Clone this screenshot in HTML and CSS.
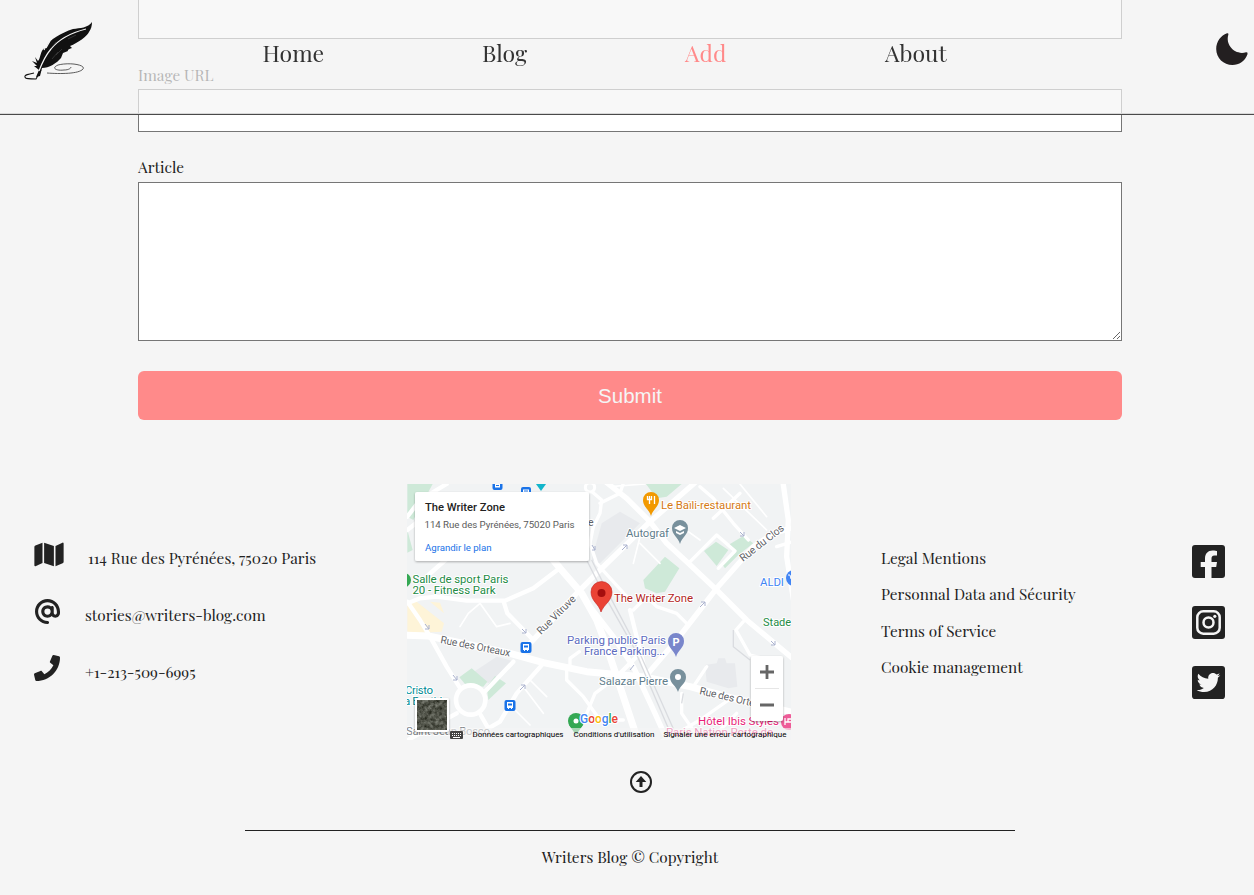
FILE: index.html
```html
<!DOCTYPE html>
<html lang="en">
<head>
<meta charset="utf-8">
<title>Writers Blog</title>
<link rel="stylesheet" href="styles.css">
</head>
<body>
<header class="header">
  <svg class="logo" viewBox="0 0 72 62" aria-label="Writers Blog">
    <path fill="#111" d="M70 1C66 7 58 7 51 8C39 12 28 18 23 27C18 29 19 37 16 40L13 36L15 42L10 40L15 45L12 45L17 49L14 56L18 55L20 47C27 47 35 42 39 37L41 32L46 30C45 29 47 28 50 27L48 25C56 22 65 15 67 11C69 8 70 5 70 1Z"/>
    <path fill="none" stroke="#f5f5f5" stroke-width="1.2" d="M64 8C48 12 37 18 29 28C23 35 20 42 17 50M25 23L22 29M28 20L24 27"/>
    <path fill="none" stroke="#555" stroke-width=".5" d="M30 38L36 31M34 34L40 28M34 21L31 25M46 18L54 14"/>
    <path fill="none" stroke="#111" stroke-width="1.1" d="M19 49L14 58C8 58 3 58 3 56C2 54 7 53 12 52"/>
    <path fill="none" stroke="#333" stroke-width=".8" d="M25 52C38 53 57 53 61 48C64 44 48 41 36 44C29 47 34 50 42 49C47 49 49 47 49 46"/>
  </svg>
  <nav class="nav">
    <a class="nav-link">Home</a>
    <a class="nav-link">Blog</a>
    <a class="nav-link active">Add</a>
    <a class="nav-link">About</a>
  </nav>
  <svg class="moon" viewBox="0 0 34 34"><path fill="#231f20" d="M12 1.2Q13.6 .8 13.4 2.6C10 13 20 23.500 31 20.300Q33.300 20 32.400 22.500C30 29 24 33 17.500 33C8.500 33 1.200 26 1.200 17C1.200 9.500 6 3.200 12 1.200Z"/></svg>
</header>

<main class="form">
  <input class="field" type="text">
  <label class="label label-image">Image URL</label>
  <input class="field" type="text">
  <label class="label">Article</label>
  <textarea class="area"></textarea>
  <button class="submit">Submit</button>
</main>

<footer class="footer">
  <div class="columns">
    <ul class="contacts">
      <li class="contact">
        <svg class="icon-map" viewBox="0 0 576 512"><path d="M0 118v362c0 11 11 19 22 15l138-63V32L20 88C8 93 0 105 0 118zM192 32v400l192 64V96zM554 33L416 96v400l140-56c12-5 20-17 20-30V48c0-11-11-19-22-15z"/></svg>
        <span class="contact-text">114 Rue des Pyrénées, 75020 Paris</span>
      </li>
      <li class="contact">
        <svg class="icon-at" viewBox="0 0 512 512"><path d="M256 64C150 64 64 150 64 256s86 192 192 192c17.700 0 32 14.300 32 32s-14.300 32-32 32C114.600 512 0 397.400 0 256S114.600 0 256 0S512 114.600 512 256v32c0 53-43 96-96 96c-29.300 0-55.600-13.200-73.200-33.900C320 371.100 289.500 384 256 384c-70.700 0-128-57.300-128-128s57.300-128 128-128c27.900 0 53.700 8.900 74.700 24.100c5.700-5 13.100-8.100 21.300-8.100c17.700 0 32 14.300 32 32v112c0 17.700 14.300 32 32 32s32-14.300 32-32V256c0-106-86-192-192-192zm64 192a64 64 0 1 0-128 0 64 64 0 1 0 128 0z"/></svg>
        <span class="contact-text">stories@writers-blog.com</span>
      </li>
      <li class="contact">
        <svg class="icon-phone" viewBox="0 0 512 512"><path d="M493.400 24.600l-104-24c-11.300-2.600-22.900 3.300-27.500 13.900l-48 112c-4.200 9.800-1.400 21.300 6.900 28l60.600 49.600c-36 76.700-98.900 140.500-177.200 177.200l-49.600-60.600c-6.800-8.300-18.200-11.100-28-6.900l-112 48C3.900 366.500-2 378.100.6 389.400l24 104C27.100 504.200 36.700 512 48 512c256.100 0 464-207.500 464-464 0-11.200-7.700-20.900-18.600-23.400z"/></svg>
        <span class="contact-text">+1-213-509-6995</span>
      </li>
    </ul>

    <svg class="map" viewBox="407 484 384 256">
      <defs>
        <clipPath id="mapclip"><rect x="407" y="484" width="384" height="256"/></clipPath>
        <filter id="shadow" x="-20%" y="-20%" width="140%" height="150%"><feDropShadow dx="0" dy="1" stdDeviation="1.300" flood-opacity=".3"/></filter>
        <filter id="terrain" x="0" y="0" width="100%" height="100%" color-interpolation-filters="sRGB"><feTurbulence type="fractalNoise" baseFrequency=".28" numOctaves="3" seed="7"/><feColorMatrix values=".5 0 0 0 .07  .5 0 0 0 .08  .5 0 0 0 .04  0 0 0 0 1"/></filter>
      </defs>
      <g clip-path="url(#mapclip)">
        <rect x="407" y="484" width="384" height="256" fill="#f1f3f4"/>
        <g transform="translate(400 480) scale(.33333)">
          <path fill="#e8eaed" d="M605 130L660 95L720 130L600 250L575 240ZM215 580L290 530L345 545L265 610ZM915 555L950 550L955 535L975 535L980 550L1005 550L1012 620L985 625L920 605Z"/>
          <path fill="#cee9d8" d="M738 12H845L800 50L770 55ZM22 12H98L40 120L22 110ZM22 150L38 210L22 218ZM730 300L795 230L838 265L795 335L770 340L735 325ZM912 213L948 185L985 210L950 258ZM985 195L1030 168L1060 190L1015 225L975 265L968 255L1005 215ZM178 592L215 565L262 605L250 620L195 612ZM260 620L285 588L318 610L265 660Z"/>
          <path fill="#fef4d8" d="M22 370L50 365L132 430L125 455L60 458L22 455ZM90 365L120 368L132 400Z"/>
          <g fill="none" stroke="#fff" stroke-linecap="round" stroke-linejoin="round">
            <path stroke-width="21" d="M0 465L85 468L330 520L430 548L560 575L740 592L870 620L1000 655L1190 700M390 155L480 265L545 340L590 420L620 500L650 590L700 740L720 800"/>
            <path stroke-width="16" d="M390 490L530 340L600 270L750 125L900 -5M570 380L640 470L700 560L765 700L810 800M610 0L680 55L750 125L800 190L865 250L950 330L1040 420L1190 545M740 585L830 480L950 325L1060 200L1120 160L1170 145M1148 0L1165 120L1160 230L1190 420"/>
            <path stroke-width="13" d="M22 365L60 420L90 470L140 560L185 632M22 370L60 355L110 350L200 362L315 362L400 325L475 268M310 362L322 400L395 475M242 705L265 745L300 725L350 640L430 550M250 640L340 545M15 785L60 760L170 700M22 110L60 60L140 12M22 150L60 120M85 285L165 215M650 590L720 520M690 390L710 470L740 592"/>
            <path stroke-width="10" d="M550 725L585 640L645 595M500 560L500 600L550 650L600 720L670 720M510 560L510 535L538 515M570 30L605 60L600 100L580 140L570 190L590 250L690 360M600 70L660 40L670 10M865 250L950 165L1005 213L955 265M1030 425L1008 450L1050 525L1090 535M900 20L940 55L1000 130L1045 180M770 790L830 760L900 720L1000 650M845 640L845 700L900 780M1130 200L1180 185M940 115L1020 40M920 560L880 620M960 750L1010 700M700 390L740 350L770 380L830 400L860 430"/>
            <path stroke-width="5" d="M390 600L440 650M370 620L430 700M330 675L390 735M180 440L205 400L240 370L290 440L330 430M630 20L735 12M720 190L780 250M865 155L900 180M970 25L1100 150M720 170L700 250M1010 0L1100 110"/>
          </g>
          <path fill="none" stroke="#dadce0" stroke-width="4" d="M560 240L610 340L700 500L820 780M575 240L630 350L715 510L835 780M1000 450L1000 500L1050 540M850 640L845 670"/>
          <circle cx="212" cy="660" r="44" fill="#f1f3f4" stroke="#fff" stroke-width="14"/>
          <circle cx="570" cy="22" r="14" fill="#f1f3f4" stroke="#fff" stroke-width="9"/>
        </g>
        <g font-family="Roboto" font-size="11.500" stroke="#fff" stroke-width="2" paint-order="stroke" stroke-linejoin="round">
          <g fill="#238b45"><text x="412.500" y="583" textLength="96">Salle de sport Paris</text><text x="412.500" y="594" textLength="83">20 - Fitness Park</text><text x="763" y="626" font-size="11">Stade</text></g>
          <text x="661" y="509" textLength="90" fill="#d57a15">Le Baïli-restaurant</text>
          <g fill="#607d8b"><text x="626" y="537" textLength="43">Autograf</text><text x="599" y="685" textLength="69">Salazar Pierre</text><text x="406" y="735" textLength="84" fill="#81868a">Saint-Jean Bosco</text></g>
          <g fill="#5c6bc0"><text x="567" y="644" textLength="99">Parking public Paris</text><text x="584" y="655" textLength="81">France Parking...</text></g>
          <text x="614" y="602" textLength="79" fill="#b3261e">The Writer Zone</text>
          <text x="760" y="586" textLength="24" fill="#4285f4">ALDI</text>
          <g fill="#008b95"><text x="405" y="694" textLength="28">Cristo</text><text x="404" y="705" textLength="44">a Bastide</text></g>
          <g fill="#e91e78"><text x="698" y="725" textLength="81">Hôtel Ibis Styles</text><text x="666" y="736" textLength="107">Paris Nation Porte de</text></g>
          <g font-size="10.500" fill="#5f6368">
            <text transform="translate(440 643) rotate(11)" textLength="71">Rue des Orteaux</text>
            <text transform="translate(541 635) rotate(-45)" textLength="50">Rue Vitruve</text>
            <text transform="translate(743 562) rotate(-38)" textLength="53">Rue du Clos</text>
            <text transform="translate(699 694) rotate(13)" textLength="72">Rue des Orteaux</text>
            <text x="588" y="526">e</text>
          </g>
        </g>
        <path stroke="#aab2ce" fill="none" d="M425 624l4 5m0-4v4h-4M453 675l4 5m0-4v4h-4M622 550l5-5m-4 0h4v4M700 607l5-5m-4 0h4v4M740 532l4 4m0-4v4h-4M771 641l4 4m0-4v4h-4M520 690l5-5m-4 0h4v4M522 629l4 4m0-4v4h-4M592 545l3 5m0-4v4h-3M630 670l4-5"/>
        <g>
          <path fill="#f29900" d="M651 516C649 509 643 507 643 500A8 8 0 0 1 659 500C659 507 653 509 651 516Z"/>
          <path stroke="#fff" stroke-width="1.300" fill="none" d="M647.500 496v3.500h4v-3.500m-2 0v8M654.500 496v8"/>
          <path fill="#78909c" d="M680 544C678 537 672 535 672 528A8 8 0 0 1 688 528C688 535 682 537 680 544ZM678 692C676 685 670 684 670 677A8 8 0 0 1 686 677C686 684 680 685 678 692Z"/>
          <path fill="#fff" d="M674 528l6-3l6 3l-6 3zM676 531l4 2l4-2v2l-4 2l-4-2z"/><circle cx="678" cy="677" r="3" fill="#fff"/>
          <path fill="#7986cb" d="M676 657C674 650 668 648 668 641A8 8 0 0 1 684 641C684 648 678 650 676 657Z"/>
          <text x="672.500" y="646" font-family="Roboto" font-weight="700" font-size="11" fill="#fff">P</text>
          <path fill="#ea4335" stroke="#c5221f" stroke-width=".6" d="M601 612C599 604 591 601 591 592A10.500 10.500 0 0 1 612 592C612 601 604 604 601 612Z"/><circle cx="601.500" cy="593" r="4" fill="#a50e0e"/>
          <circle cx="576" cy="721" r="8" fill="#34a853"/><path fill="#34a853" d="M569 725L576 735L583 725Z"/><circle cx="576" cy="721" r="2.500" fill="#fff"/>
          <circle cx="404" cy="580" r="7" fill="#34a853"/><path d="M404 591l5-7h-5z" fill="#34a853"/><circle cx="794" cy="578" r="8" fill="#4285f4"/><path stroke="#fff" fill="none" d="M788 575h2l1 4"/>
          <circle cx="789" cy="722" r="8" fill="#ee5c98"/><path d="M785 718v7m0-3h7m-4 0v-3h4" stroke="#fff" stroke-width="1.300" fill="none"/>
          <path fill="#12b5cb" d="M536 484h10l-5 7z"/>
          <g fill="#1a73e8"><rect x="520.500" y="642" width="11" height="11" rx="2"/><rect x="504.500" y="700" width="11" height="11" rx="2"/><rect x="521" y="487" width="10" height="11" rx="2"/><rect x="492.500" y="479" width="10" height="11" rx="2"/></g>
          <path fill="#fff" fill-rule="evenodd" d="M523 644h6v6h-1v1h-1v-1h-2v1h-1v-1h-1zM524 645.500v2h4v-2zM507 702h6v6h-1v1h-1v-1h-2v1h-1v-1h-1zM508 703.500v2h4v-2zM523 489.500h6v4h-6zM524 490.500v1h4v-1zM495 484h5v3.500h-5zM496 485v1h3v-1z"/>
        </g>
        <rect x="448" y="728" width="343" height="12" fill="#f5f5f5" opacity=".6"/>
        <rect x="415" y="492" width="174" height="69" rx="2" fill="#fff" filter="url(#shadow)"/>
        <g font-family="Roboto">
          <text x="425" y="511" font-size="11.300" font-weight="500" textLength="80" lengthAdjust="spacingAndGlyphs">The Writer Zone</text>
          <text x="424.500" y="528" font-size="9.700" fill="#5b5b5b" textLength="150">114 Rue des Pyrénées, 75020 Paris</text>
          <text x="425" y="551" font-size="9.700" fill="#1a73e8" textLength="66.500">Agrandir le plan</text>
        </g>
        <rect x="415" y="698" width="34" height="34" rx="2" fill="#fff" filter="url(#shadow)"/><rect x="417" y="700" width="30" height="30" filter="url(#terrain)"/>
        <rect x="751" y="656" width="32" height="65" rx="2" fill="#fff" filter="url(#shadow)"/>
        <path stroke="#e6e6e6" d="M755 688.500h24"/><path stroke="#666" stroke-width="2.800" d="M760 672h14m-7-7v14M760 705h14"/>
        <text x="580" y="723" font-family="Roboto" font-size="12" font-weight="500" textLength="38" stroke="#fff" stroke-width="2" paint-order="stroke"><tspan fill="#4285f4">G</tspan><tspan fill="#ea4335">o</tspan><tspan fill="#fbbc04">o</tspan><tspan fill="#4285f4">g</tspan><tspan fill="#34a853">l</tspan><tspan fill="#ea4335">e</tspan></text>
        <rect x="450" y="731" width="13" height="8" rx="1" fill="#444"/><path stroke="#fff" stroke-dasharray="1 1" d="M452 733.500h9M452 735.500h9"/><path stroke="#fff" d="M453 737.500h7"/>
        <g font-family="Roboto" font-size="8" fill="#000"><text x="472.500" y="737" textLength="91">Données cartographiques</text><text x="573.500" y="737" textLength="81">Conditions d'utilisation</text><text x="663.500" y="737" textLength="123">Signaler une erreur cartographique</text></g>
      </g>
    </svg>

    <ul class="legal">
      <li class="legal-item">Legal Mentions</li>
      <li class="legal-item">Personnal Data and Sécurity</li>
      <li class="legal-item">Terms of Service</li>
      <li class="legal-item">Cookie management</li>
    </ul>

    <div class="social">
      <svg class="social-icon" viewBox="0 0 33 33"><rect width="33" height="33" rx="3"/><path class="cut" d="M13 33V22H8.700V17H13V13.500C13 8.500 16 5.500 20.500 5.500C22.500 5.500 25 6 25 6V10.500H22.500C20 10.500 19.500 12 19.500 13.500V17H25L24.200 22H19.500V33Z"/></svg>
      <svg class="social-icon" viewBox="0 0 33 33"><rect width="33" height="33" rx="3"/><g class="line"><rect x="5.300" y="5.300" width="22.400" height="22.400" rx="6"/><circle cx="16.500" cy="16.500" r="5"/></g><circle class="cut" cx="22.800" cy="10.300" r="1.600"/></svg>
      <svg class="social-icon" viewBox="0 0 448 448"><rect width="448" height="448" rx="42"/><path class="cut" d="M351.100 158.800c.2 2.800.2 5.700.2 8.500 0 86.700-66 186.600-186.600 186.600-37.200 0-71.700-10.800-100.700-29.400 5.300.6 10.400.8 15.800.8 30.700 0 58.900-10.400 81.400-28-28.800-.6-53-19.500-61.300-45.500 10.100 1.500 19.200 1.500 29.600-1.200-30-6.100-52.500-32.500-52.500-64.400v-.8c8.700 4.900 18.900 7.900 29.600 8.300-18.300-12.200-29.200-32.700-29.200-54.600 0-12.200 3.200-23.400 8.900-33.100 32.300 39.800 80.800 65.800 135.200 68.600-9.300-44.500 24-80.600 64-80.600 18.900 0 35.900 7.900 47.900 20.700 14.800-2.800 29-8.300 41.600-15.800-4.900 15.200-15.200 28-28.800 36.100 13.200-1.400 26-5.100 37.800-10.200-8.900 13.100-20.100 24.700-32.900 34z"/></svg>
    </div>
  </div>

  <svg class="to-top" viewBox="0 0 22 22"><circle cx="11" cy="11" r="10" fill="none" stroke="#222" stroke-width="2"/><path d="M11 5L16.300 11H12.500V16H9.500V11H5.700Z"/></svg>
  <div class="rule"></div>
  <p class="copyright">Writers Blog © Copyright</p>
</footer>
</body>
</html>
```
FILE: styles.css
```css
* { box-sizing: border-box; }

body {
  margin: 0;
  height: 895px;
  overflow: hidden;
  background: #f5f5f5;
  color: #222;
  font: 15.36px/27px "Playfair Display", "Liberation Serif", serif;
}

ul { list-style: none; margin: 0; padding: 0; }
svg { display: block; fill: #222; }

.header {
  position: fixed;
  top: 0;
  left: 0;
  z-index: 2;
  display: flex;
  width: 100%;
  height: 115px;
  padding: 21px 5px 0 22px;
  background: rgba(245, 245, 245, .7);
  border-bottom: 1px solid #4a4a4a;
  box-shadow: inset 0 -1px #d8d8d8;
}

.logo { width: 72px; height: 62px; }

.nav {
  display: grid;
  grid-template-columns: 219.5px 203px 200px 62px;
  margin-left: 168.5px;
  padding-top: 14px;
}

.nav-link { color: #333; font-size: 23.04px; line-height: 36px; white-space: nowrap; }
.nav-link.active { color: #ff8a8a; }
.moon { width: 34px; height: 34px; margin: 11px 0 0 auto; }

.form {
  display: flex;
  flex-direction: column;
  width: 984px;
  margin: -4px 0 0 138px;
}

.field {
  height: 43px;
  margin: 0 0 22px;
  border: 1px solid #767676;
  border-radius: 0;
  background: #fff;
}

.label { height: 28px; line-height: 26px; }
.label-image { line-height: 28px; }

.area {
  height: 159px;
  margin: 0 0 30px;
  border: 1px solid #767676;
  background: #fff;
}

.submit {
  height: 49px;
  padding: 0;
  border: 0;
  border-radius: 6px;
  background: #ff8a8a;
  color: #f5f5f5;
  font: 20.5px "Liberation Sans", Arial, sans-serif;
}

.footer { padding-top: 64px; }

.columns {
  display: grid;
  grid-template-columns: 373px 474px 311px 34px;
  align-items: start;
  height: 256px;
  padding-left: 34px;
}

.contacts { padding-top: 58px; }
.contact { display: flex; height: 57px; white-space: nowrap; }
.contact-text { padding-top: 2px; }
.icon-map { width: 30px; height: 26px; margin: -1px 24px 0 0; }
.icon-at { width: 25px; height: 25px; margin: 0 25px 0 1px; }
.icon-phone { width: 26px; height: 26px; margin: -1px 25px 0 0; }

.map { width: 384px; height: 256px; }

.legal { padding-top: 60px; }
.legal-item { height: 36.4px; white-space: nowrap; }

.social { display: flex; flex-direction: column; gap: 27.5px; padding-top: 61px; }
.social-icon { width: 33px; height: 33px; }
.cut { fill: #f5f5f5; }
.line { fill: none; stroke: #f5f5f5; stroke-width: 2.5; }

.to-top { width: 22px; height: 22px; margin: 31px 0 0 630px; }
.rule { width: 770px; height: 1px; margin: 37px 0 0 245px; background: #222; }
.copyright { width: 1260px; margin: 12px 0 0; text-align: center; }
```
